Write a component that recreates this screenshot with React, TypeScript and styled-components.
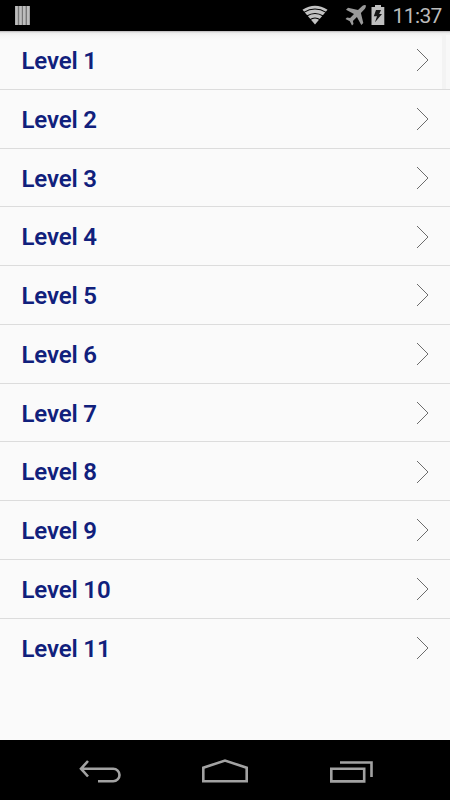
import React from 'react';
import styled, { createGlobalStyle } from 'styled-components';

const GlobalStyle = createGlobalStyle`
  * { box-sizing: border-box; }
  body { margin: 0; background: #000; font-family: Roboto, sans-serif; }
  svg { display: block; flex: none; }
`;

const Screen = styled.div`
  display: flex;
  flex-direction: column;
  width: 450px;
  height: 800px;
  overflow: hidden;
  background: #fafafa;
`;

const StatusBar = styled.header`
  display: flex;
  flex: none;
  justify-content: space-between;
  height: 31px;
  padding: 0 8px 0 15px;
  background: #000;
`;

const StatusGroup = styled.div`
  display: flex;
  align-items: flex-start;
`;

const PlaneSlot = styled.span`
  margin: 0 4px 0 17px;
`;

const Clock = styled.time`
  width: 49.5px;
  margin-left: 7.5px;
  padding-top: 4px;
  color: #bcbcbc;
  font-size: 21px;
  line-height: 24px;
  letter-spacing: -0.6px;
  white-space: nowrap;
`;

const Content = styled.main`
  position: relative;
  flex: 1;
  background: linear-gradient(#b5b1b5 0, #d5d5d5 1px, #eeeeee 2px, #f6f6f6 5px, #fafafa 9px);
`;

const ScrollThumb = styled.div`
  position: absolute;
  top: 4px;
  right: 0;
  width: 8px;
  height: 54px;
  background: linear-gradient(90deg, #f3f3f3 0 4px, #f8f8f8 4px);
`;

const LevelList = styled.ul`
  margin: 0;
  padding: 0;
  list-style: none;
`;

const LevelRow = styled.li<{ $last: boolean }>`
  display: flex;
  align-items: center;
  justify-content: space-between;
  height: 58.75px;
  padding: 1px 21px 0 21.5px;
  border-bottom: 1px solid ${({ $last }) => ($last ? 'transparent' : '#dcdcdc')};
`;

const LevelName = styled.span`
  padding-top: 1.4px;
  color: #10207c;
  font-size: 24px;
  font-weight: 600;
  line-height: 30px;
  letter-spacing: -0.15px;
`;

const NavBar = styled.nav`
  display: flex;
  flex: none;
  align-items: flex-start;
  justify-content: space-between;
  height: 60px;
  padding: 18px 76px 0 78px;
  background: #000;
`;

const levels = Array.from({ length: 11 }, (_, i) => `Level ${i + 1}`);

const BarsIcon = () => (
  <svg width="15" height="31" viewBox="0 0 15 31">
    <path d="M0 6H15V25H0Z" fill="#777" />
    <path d="M1.5 6V25M5.5 6V25M9.3 6V25M13.3 6V25" stroke="#bdbdbd" strokeWidth="2.6" />
  </svg>
);

const WifiIcon = () => (
  <svg width="26" height="31" viewBox="0 0 26 31">
    <path d="M0.5 9.7Q13 1.7 25.5 9.7L13 24.5Z" fill="#c2c2c2" />
    <path d="M1.8 12.4Q13 5.7 24.2 12.4M4.8 16Q13 10.9 21.2 16M7.8 19.7Q13 16.2 18.2 19.7" fill="none" stroke="#000" strokeWidth="1.1" />
  </svg>
);

const AirplaneIcon = () => (
  <svg width="22" height="31" viewBox="0 0 22 31">
    <path d="M20.7 5.3C19.5 4.7 17.5 5.6 16.2 7L13 10.1L3 7.7L1 9.7L9 14.1L5.1 18.1L2 17.5L0.5 19L4.8 21.2L7 25.5L8.5 24L7.9 20.9L11.9 17L16.3 25L18.3 23L15.9 13L19 9.8C20.4 8.4 21.3 6.5 20.7 5.3Z" fill="#999" />
  </svg>
);

const BatteryIcon = () => (
  <svg width="14" height="31" viewBox="0 0 14 31">
    <path d="M4 5H10V7H13.3V25H0.5V7H4Z" fill="#bfbfbf" />
    <path d="M5 10H10L8.2 14H11L4 22.3L6 16.2H2.8Z" fill="#161616" />
  </svg>
);

const ChevronIcon = () => (
  <svg width="13" height="24" viewBox="0 0 13 24">
    <path d="M1 1L12 12L1 23" fill="none" stroke="#6c6c6c" strokeWidth="1" />
  </svg>
);

const BackIcon = () => (
  <svg width="44" height="28" viewBox="0 0 44 28">
    <path d="M10 3L3 10.7L10 18.5M3 10.7H35.2A6.2 6.2 0 0 1 35.2 23.3H20" fill="none" stroke="#a2a2a2" strokeWidth="2.6" />
  </svg>
);

const HomeIcon = () => (
  <svg width="48" height="28" viewBox="0 0 48 28">
    <path d="M1.3 23.2V9.8L23 2.5L44.7 9.8V23.2Z" fill="none" stroke="#a2a2a2" strokeWidth="2.6" />
  </svg>
);

const RecentsIcon = () => (
  <svg width="45" height="28" viewBox="0 0 45 28">
    <path d="M2.3 10.8H35.2V23.4H2.3ZM11 4.5H42.5V19" fill="none" stroke="#a2a2a2" strokeWidth="2.6" />
  </svg>
);

export default function App() {
  return (
    <Screen>
      <GlobalStyle />
      <StatusBar>
        <BarsIcon />
        <StatusGroup>
          <WifiIcon />
          <PlaneSlot><AirplaneIcon /></PlaneSlot>
          <BatteryIcon />
          <Clock>11:37</Clock>
        </StatusGroup>
      </StatusBar>
      <Content>
        <LevelList>
          {levels.map((level, i) => (
            <LevelRow key={level} $last={i === levels.length - 1}>
              <LevelName>{level}</LevelName>
              <ChevronIcon />
            </LevelRow>
          ))}
        </LevelList>
        <ScrollThumb />
      </Content>
      <NavBar>
        <BackIcon />
        <HomeIcon />
        <RecentsIcon />
      </NavBar>
    </Screen>
  );
}
